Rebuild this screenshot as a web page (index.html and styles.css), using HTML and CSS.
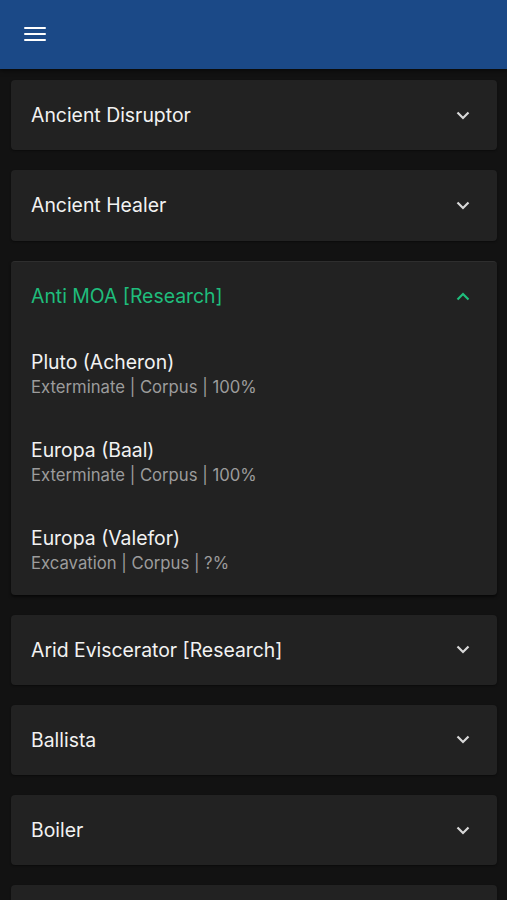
FILE: index.html
```html
<!DOCTYPE html>
<html lang="en">
<head>
  <meta charset="UTF-8" />
  <meta name="viewport" content="width=device-width, initial-scale=1.0"/>
  <title>Enemies</title>
  <link rel="stylesheet" href="styles.css">
</head>
<body>

  <header class="topbar">
    <span class="menu-btn">
      <svg width="22" height="16" viewBox="0 0 22 16">
        <rect x="0" y="1" width="22" height="2" rx="1" fill="#fff"/>
        <rect x="0" y="7" width="22" height="2" rx="1" fill="#fff"/>
        <rect x="0" y="13" width="22" height="2" rx="1" fill="#fff"/>
      </svg>
    </span>
  </header>

  <main class="list">
    <div class="panel">
      <div class="panel-head">
        <span>Ancient Disruptor</span>
        <svg class="chevron" width="14" height="9" viewBox="0 0 14 9"><path d="M1.5 1.5 L7 7 L12.5 1.5" /></svg>
      </div>
    </div>

    <div class="panel">
      <div class="panel-head">
        <span>Ancient Healer</span>
        <svg class="chevron" width="14" height="9" viewBox="0 0 14 9"><path d="M1.5 1.5 L7 7 L12.5 1.5" /></svg>
      </div>
    </div>

    <div class="panel open">
      <div class="panel-head">
        <span>Anti MOA [Research]</span>
        <svg class="chevron" width="14" height="9" viewBox="0 0 14 9"><path d="M1.5 7.5 L7 2 L12.5 7.5" /></svg>
      </div>
      <div class="panel-body">
        <div class="node">
          <div class="node-name">Pluto (Acheron)</div>
          <div class="node-info">Exterminate | Corpus | 100%</div>
        </div>
        <div class="node">
          <div class="node-name">Europa (Baal)</div>
          <div class="node-info">Exterminate | Corpus | 100%</div>
        </div>
        <div class="node">
          <div class="node-name">Europa (Valefor)</div>
          <div class="node-info">Excavation | Corpus | ?%</div>
        </div>
      </div>
    </div>

    <div class="panel">
      <div class="panel-head">
        <span>Arid Eviscerator [Research]</span>
        <svg class="chevron" width="14" height="9" viewBox="0 0 14 9"><path d="M1.5 1.5 L7 7 L12.5 1.5" /></svg>
      </div>
    </div>

    <div class="panel">
      <div class="panel-head">
        <span>Ballista</span>
        <svg class="chevron" width="14" height="9" viewBox="0 0 14 9"><path d="M1.5 1.5 L7 7 L12.5 1.5" /></svg>
      </div>
    </div>

    <div class="panel">
      <div class="panel-head">
        <span>Boiler</span>
        <svg class="chevron" width="14" height="9" viewBox="0 0 14 9"><path d="M1.5 1.5 L7 7 L12.5 1.5" /></svg>
      </div>
    </div>

    <!-- next item starts just below the fold -->
    <div class="panel">
      <div class="panel-head"></div>
    </div>
  </main>

</body>
</html>
```

FILE: styles.css
```css
body {
  font-family: 'Inter', 'Noto Sans', sans-serif;
  background: #121212;
  margin: 0;
  color: #f2f2f2;
  overflow: hidden;
  height: 900px;
}
.topbar {
  height: 69px;
  background: #1b4987;
  display: flex;
  align-items: center;
  padding-left: 24px;
  box-shadow: 0 2px 4px rgba(0, 0, 0, 0.5);
}
.menu-btn {
  display: flex;
  margin-top: -1px;
}
.list {
  padding: 11px 10px 0 11px;
  display: flex;
  flex-direction: column;
  gap: 20px;
}
.panel {
  background: #222222;
  border-radius: 4px;
  box-shadow: 0 1px 2px rgba(0, 0, 0, 0.4);
}
.panel.open {
  border-top: 1px solid #2e2e2e;
  box-shadow: 0 2px 3px rgba(0, 0, 0, 0.6);
}
.panel-head {
  height: 70.25px;
  display: flex;
  align-items: center;
  justify-content: space-between;
  padding: 0 27px 0 20px;
  font-size: 19.4px;
}
.panel.open .panel-head {
  height: 69px;
  color: #1fbd7c;
}
.chevron path {
  fill: none;
  stroke: #d8d8d8;
  stroke-width: 2.2;
}
.panel.open .chevron path {
  stroke: #1fbd7c;
}
.node {
  height: 88px;
  padding: 19px 20px 0;
  box-sizing: border-box;
}
.node-name {
  font-size: 19.4px;
  line-height: 24px;
}
.node-info {
  font-size: 16.7px;
  line-height: 24px;
  color: #9c9c9c;
  margin-top: 1px;
}
```
